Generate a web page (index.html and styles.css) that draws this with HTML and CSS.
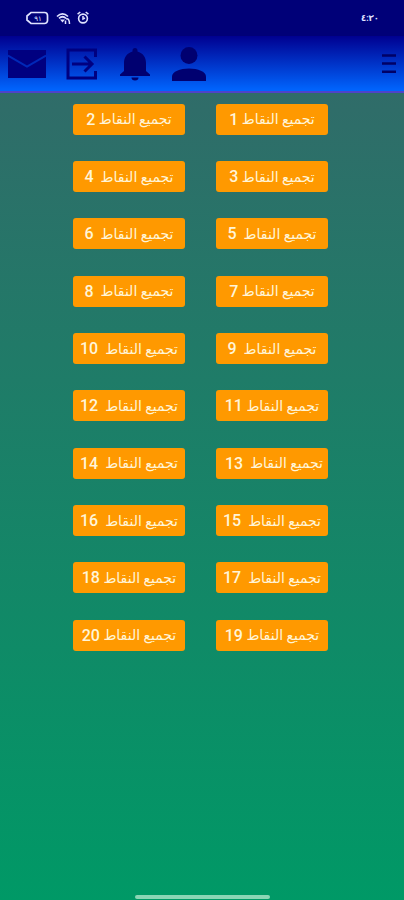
FILE: index.html
```html
<!DOCTYPE html>
<html lang="ar" dir="rtl">
<head>
    <meta charset="UTF-8">
    <meta name="viewport" content="width=device-width, initial-scale=1.0">
    <title>تجميع النقاط</title>
    <link rel="stylesheet" href="styles.css">
</head>
<body>
    <div class="status-bar">
        <span class="clock">٤:٣٠</span>
        <div class="status-icons">
            <svg width="24" height="14" viewBox="0 0 24 14">
                <path d="M5 1.500h13.500a3 3 0 0 1 3 3v5a3 3 0 0 1-3 3H5L1 9V5z" fill="none" stroke="#dfe2ff" stroke-width="1.700"/>
                <text class="battery-text" x="12" y="9.500" text-anchor="middle">٩١</text>
            </svg>
            <svg width="15" height="13" viewBox="0 0 15 13">
                <path d="M1 4.500Q6.500-.8 12 4.500M3 6.300Q6.500 3.200 10 6.300" fill="none" stroke="#dfe2ff" stroke-width="1.700"/>
                <path d="M4 7.500h5L6.500 10.500z" fill="#dfe2ff"/>
                <path d="M10 7q3.500-1 3.500 5M9.500 8.500v3.500" fill="none" stroke="#dfe2ff" stroke-width="1.500"/>
            </svg>
            <svg width="12" height="14" viewBox="0 0 12 14">
                <circle cx="6" cy="7.500" r="4.400" fill="none" stroke="#dfe2ff" stroke-width="1.600"/>
                <path d="M.6 3.200L3.300 1M11.400 3.200L8.700 1M6 5v3l2-1" fill="none" stroke="#dfe2ff" stroke-width="1.500"/>
            </svg>
        </div>
    </div>

    <header>
        <svg class="menu" width="16" height="22" viewBox="0 0 16 22">
            <path d="M1 2.500h14M1 10.500h14M1 18.800h14" stroke="#000066" stroke-width="2.400"/>
        </svg>
        <div class="nav-icons">
            <svg width="38" height="28" viewBox="0 0 38 28">
                <path d="M0 0h38v28H0z" fill="#000080"/>
                <path d="M0 5.500l19 11 19-11" fill="none" stroke="#0028b8" stroke-width="2"/>
            </svg>
            <svg width="32" height="32" viewBox="0 0 32 32">
                <path d="M29.500 9V2H2v28h27.500v-7" fill="none" stroke="#000080" stroke-width="3"/>
                <path d="M6 16h20M18.500 8.500L26 16l-7.500 7.500" fill="none" stroke="#000080" stroke-width="3"/>
            </svg>
            <svg width="30" height="34" viewBox="0 0 30 34">
                <path d="M12.500 3.500a2.500 2.500 0 0 1 5 0v1c5.500 1.500 8.500 6 8.500 11.500v8l4 3.500v1.500H0v-1.500L4 24v-8c0-5.500 3-10 8.500-11.500z" fill="#000070"/>
                <path d="M11.500 30.500h7a3.500 3 0 0 1-7 0z" fill="#000070"/>
            </svg>
            <svg width="34" height="34" viewBox="0 0 34 34">
                <circle cx="17" cy="8.500" r="8.500" fill="#000070"/>
                <path d="M0 34v-4.500C0 24.500 8 21.500 17 21.500s17 3 17 8V34z" fill="#000070"/>
            </svg>
        </div>
    </header>

    <main class="points">
        <button class="point-btn">تجميع النقاط <b>1</b></button>
        <button class="point-btn">تجميع النقاط <b>2</b></button>
        <button class="point-btn">تجميع النقاط <b>3</b></button>
        <button class="point-btn">تجميع النقاط  <b>4</b></button>
        <button class="point-btn">تجميع النقاط  <b>5</b></button>
        <button class="point-btn">تجميع النقاط  <b>6</b></button>
        <button class="point-btn">تجميع النقاط <b>7</b></button>
        <button class="point-btn">تجميع النقاط  <b>8</b></button>
        <button class="point-btn">تجميع النقاط  <b>9</b></button>
        <button class="point-btn">تجميع النقاط  <b>10</b></button>
        <button class="point-btn">تجميع النقاط <b>11</b></button>
        <button class="point-btn">تجميع النقاط  <b>12</b></button>
        <button class="point-btn shifted">تجميع النقاط  <b>13</b></button>
        <button class="point-btn">تجميع النقاط  <b>14</b></button>
        <button class="point-btn">تجميع النقاط  <b>15</b></button>
        <button class="point-btn">تجميع النقاط  <b>16</b></button>
        <button class="point-btn">تجميع النقاط  <b>17</b></button>
        <button class="point-btn">تجميع النقاط <b>18</b></button>
        <button class="point-btn">تجميع النقاط <b>19</b></button>
        <button class="point-btn">تجميع النقاط <b>20</b></button>
    </main>

    <div class="home-bar"></div>
</body>
</html>
```
FILE: styles.css
```css
* {
    margin: 0;
    padding: 0;
    box-sizing: border-box;
}

body {
    height: 900px;
    display: flex;
    flex-direction: column;
    overflow: hidden;
    font-family: Roboto, "DejaVu Sans", sans-serif;
    background: linear-gradient(to bottom, #306c69 0, #306c69 92px, #009966 900px);
}

.status-bar {
    height: 36px;
    padding: 0 25px 0 26px;
    display: flex;
    justify-content: space-between;
    align-items: center;
    background-color: #000078;
}

.clock {
    color: #dfe2ff;
    font-size: 8.500px;
    font-weight: bold;
}

.status-icons {
    display: flex;
    flex-direction: row-reverse;
    align-items: center;
    gap: 6px;
}

.battery-text {
    fill: #dfe2ff;
    font-size: 7px;
}

header {
    height: 57px;
    padding: 0 7px 0 8px;
    display: flex;
    justify-content: space-between;
    align-items: center;
    background: linear-gradient(to bottom, #000090, #0066ff);
    border-bottom: 2px solid #5043c8;
}

.nav-icons {
    display: flex;
    flex-direction: row-reverse;
    align-items: center;
    gap: 22px;
}

.nav-icons svg:first-child {
    margin-right: -2px;
}

.points {
    flex: 1;
    display: grid;
    grid-template-columns: 112px 112px;
    grid-auto-rows: 31px;
    column-gap: 31px;
    row-gap: 26.350px;
    justify-content: start;
    padding: 10.700px 76px 0 0;
}

.point-btn {
    border: none;
    border-radius: 3px;
    background-color: #ff9900;
    color: #fff5d8;
    font-family: inherit;
    font-size: 14px;
    white-space: pre;
    display: flex;
    justify-content: center;
    align-items: center;
}

.point-btn b {
    font-size: 16px;
    font-weight: 500;
}

.point-btn.shifted {
    padding-left: 4px;
}

.home-bar {
    width: 135px;
    height: 4px;
    margin: 0 auto 1px;
    border-radius: 2px;
    background-color: #8ad6b5;
}
```
